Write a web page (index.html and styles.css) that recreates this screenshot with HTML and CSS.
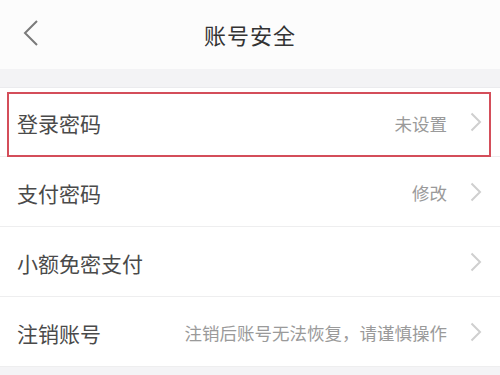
FILE: index.html
```html
<!DOCTYPE html>
<html lang="zh">
<head>
<meta charset="utf-8">
<link rel="stylesheet" href="styles.css">
</head>
<body>
<div class="page">
  <header class="topbar">
    <svg class="back" width="16" height="28" viewBox="0 0 16 28"><polyline points="14,2 2,14 14,26" fill="none" stroke="#7a7a7a" stroke-width="2"/></svg>
    <div class="title">账号安全</div>
  </header>
  <div class="band"></div>
  <ul class="list">
    <li class="row highlight">
      <span class="label">登录密码</span>
      <span class="value">未设置</span>
      <svg class="arrow" width="12" height="20" viewBox="0 0 12 20"><polyline points="1.5,1.5 10,10 1.5,18.5" fill="none" stroke="#cfcfcf" stroke-width="2"/></svg>
      <span class="box"></span>
    </li>
    <li class="row">
      <span class="label">支付密码</span>
      <span class="value">修改</span>
      <svg class="arrow" width="12" height="20" viewBox="0 0 12 20"><polyline points="1.5,1.5 10,10 1.5,18.5" fill="none" stroke="#cfcfcf" stroke-width="2"/></svg>
    </li>
    <li class="row">
      <span class="label">小额免密支付</span>
      <span class="value"></span>
      <svg class="arrow" width="12" height="20" viewBox="0 0 12 20"><polyline points="1.5,1.5 10,10 1.5,18.5" fill="none" stroke="#cfcfcf" stroke-width="2"/></svg>
    </li>
    <li class="row">
      <span class="label">注销账号</span>
      <span class="value">注销后账号无法恢复，请谨慎操作</span>
      <svg class="arrow" width="12" height="20" viewBox="0 0 12 20"><polyline points="1.5,1.5 10,10 1.5,18.5" fill="none" stroke="#cfcfcf" stroke-width="2"/></svg>
    </li>
  </ul>
</div>
</body>
</html>
```
FILE: styles.css
```css
* { box-sizing: border-box; margin: 0; padding: 0; }
html, body { width: 500px; height: 375px; overflow: hidden; background: #f4f4f6; }
body { font-family: "Noto Sans CJK SC", "Noto Sans", sans-serif; }
.page { width: 500px; height: 375px; display: flex; flex-direction: column; }
.topbar {
  height: 69px;
  background: #fcfcfc;
  display: flex;
  align-items: center;
  justify-content: center;
  position: relative;
}
.back { position: absolute; left: 23px; top: 19px; }
.title { font-size: 22px; color: #333; letter-spacing: 1px; margin-top: -1px; }
.band { height: 19px; background: #f3f3f5; border-bottom: 1px solid #ebebee; }
.list { list-style: none; background: #fff; }
.row {
  height: 70px;
  border-bottom: 1px solid #eeeeef;
  display: flex;
  align-items: center;
  padding: 0 18px 0 17px;
  position: relative;
}
.row:first-child { height: 69px; }
.label { font-size: 21px; color: #4a4a4a; flex: 1; padding-top: 2px; }
.value { font-size: 17.5px; color: #9a9a9a; margin-right: 23px; padding-top: 2px; }
.arrow { flex: none; }
.box {
  position: absolute;
  left: 7px;
  right: 9px;
  top: 4px;
  bottom: -1px;
  border: 2px solid #d44e5a;
}
```
